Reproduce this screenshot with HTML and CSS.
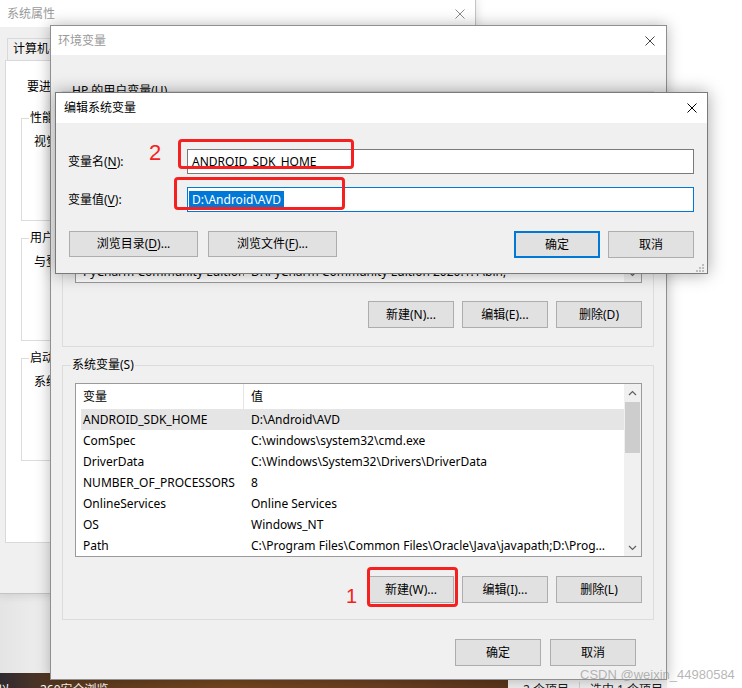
FILE: index.html
```html
<!DOCTYPE html>
<html lang="zh-CN">
<head>
<meta charset="utf-8">
<title>编辑系统变量</title>
<link rel="stylesheet" href="styles.css">
</head>
<body>
<div class="screen">
  <div class="backdrop"></div>
  <div class="desktop"><span class="desk-a">以</span><span class="desk-b">260安全浏览</span></div>
  <div class="statusbar"><span>2 个项目</span><span class="sb-sep"></span><span>选中 1 个项目</span></div>

  <section class="win win-sys">
    <header class="titlebar">
      <span class="title dim">系统属性</span>
      <svg class="close dim-x" width="10" height="10" viewBox="0 0 10 10"><path d="M0.5 0.5L9.5 9.5M9.5 0.5L0.5 9.5" stroke="currentColor" stroke-width="1"/></svg>
    </header>
    <div class="sys-body">
      <div class="tabs">
        <span class="tab">计算机名</span><span class="tab">硬件</span><span class="tab active">高级</span><span class="tab">系统保护</span><span class="tab">远程</span>
      </div>
      <div class="tabpanel">
        <p class="note">要进行大多数更改，你必须作为管理员登录。</p>
        <fieldset class="sp-group"><legend>性能</legend><p>视觉效果，处理器计划，内存使用，以及虚拟内存</p></fieldset>
        <fieldset class="sp-group"><legend>用户配置文件</legend><p>与登录帐户相关的桌面设置</p></fieldset>
        <fieldset class="sp-group"><legend>启动和故障恢复</legend><p>系统启动、系统故障和调试信息</p></fieldset>
      </div>
    </div>
  </section>

  <section class="win win-env">
    <header class="titlebar">
      <span class="title dim">环境变量</span>
      <svg class="close dim-x2" width="10" height="10" viewBox="0 0 10 10"><path d="M0.5 0.5L9.5 9.5M9.5 0.5L0.5 9.5" stroke="currentColor" stroke-width="1"/></svg>
    </header>
    <div class="env-body">
      <fieldset class="group group-user">
        <legend>HP 的用户变量(U)</legend>
        <div class="listview">
          <div class="lv-main">
            <div class="lv-row lv-head"><span class="c1">变量</span><span class="c2">值</span></div>
            <div class="lv-row"><span class="c1">ChocolateyLastPathUpdate</span><span class="c2">132512345678901234</span></div>
            <div class="lv-row"><span class="c1">GOPATH</span><span class="c2">C:\Users\HP\go</span></div>
            <div class="lv-row"><span class="c1">IntelliJ IDEA</span><span class="c2">D:\IntelliJ IDEA 2020.1\bin;</span></div>
            <div class="lv-row"><span class="c1">OneDrive</span><span class="c2">C:\Users\HP\OneDrive</span></div>
            <div class="lv-row"><span class="c1">OneDriveConsumer</span><span class="c2">C:\Users\HP\OneDrive</span></div>
            <div class="lv-row"><span class="c1">Path</span><span class="c2">C:\Users\HP\AppData\Local\Microsoft\WindowsApps;</span></div>
            <div class="lv-row"><span class="c1">PyCharm Community Edition</span><span class="c2">D:\PyCharm Community Edition 2020.1.1\bin;</span></div>
          </div>
          <div class="scrollbar">
            <span class="sb-btn"><svg width="9" height="6" viewBox="0 0 9 6"><path d="M1 5L4.5 1.5L8 5" fill="none" stroke="#606060" stroke-width="1.2"/></svg></span>
            <span class="sb-track"><span class="sb-thumb"></span></span>
            <span class="sb-btn"><svg width="9" height="6" viewBox="0 0 9 6"><path d="M1 1L4.5 4.5L8 1" fill="none" stroke="#606060" stroke-width="1.2"/></svg></span>
          </div>
        </div>
        <div class="btnrow">
          <button class="btn">新建(N)...</button>
          <button class="btn">编辑(E)...</button>
          <button class="btn">删除(D)</button>
        </div>
      </fieldset>

      <fieldset class="group group-sys">
        <legend>系统变量(S)</legend>
        <div class="listview">
          <div class="lv-main">
            <div class="lv-row lv-head"><span class="c1">变量</span><span class="c2">值</span></div>
            <div class="lv-row selected"><span class="c1">ANDROID_SDK_HOME</span><span class="c2">D:\Android\AVD</span></div>
            <div class="lv-row"><span class="c1">ComSpec</span><span class="c2">C:\windows\system32\cmd.exe</span></div>
            <div class="lv-row"><span class="c1">DriverData</span><span class="c2">C:\Windows\System32\Drivers\DriverData</span></div>
            <div class="lv-row"><span class="c1">NUMBER_OF_PROCESSORS</span><span class="c2">8</span></div>
            <div class="lv-row"><span class="c1">OnlineServices</span><span class="c2">Online Services</span></div>
            <div class="lv-row"><span class="c1">OS</span><span class="c2">Windows_NT</span></div>
            <div class="lv-row"><span class="c1">Path</span><span class="c2">C:\Program Files\Common Files\Oracle\Java\javapath;D:\Program Files\Python38\Scripts\</span></div>
          </div>
          <div class="scrollbar">
            <span class="sb-btn"><svg width="9" height="6" viewBox="0 0 9 6"><path d="M1 5L4.5 1.5L8 5" fill="none" stroke="#606060" stroke-width="1.2"/></svg></span>
            <span class="sb-track"><span class="sb-thumb"></span></span>
            <span class="sb-btn"><svg width="9" height="6" viewBox="0 0 9 6"><path d="M1 1L4.5 4.5L8 1" fill="none" stroke="#606060" stroke-width="1.2"/></svg></span>
          </div>
        </div>
        <div class="btnrow">
          <button class="btn">新建(W)...</button>
          <button class="btn">编辑(I)...</button>
          <button class="btn">删除(L)</button>
        </div>
      </fieldset>

      <div class="footer">
        <button class="btn">确定</button>
        <button class="btn">取消</button>
      </div>
    </div>
  </section>

  <section class="win win-edit">
    <header class="titlebar">
      <span class="title">编辑系统变量</span>
      <svg class="close" width="10" height="10" viewBox="0 0 10 10"><path d="M0.5 0.5L9.5 9.5M9.5 0.5L0.5 9.5" stroke="currentColor" stroke-width="1"/></svg>
    </header>
    <div class="edit-body">
      <div class="field">
        <label>变量名(<u>N</u>):</label>
        <div class="textbox">ANDROID_SDK_HOME</div>
      </div>
      <div class="field">
        <label>变量值(<u>V</u>):</label>
        <div class="textbox focus"><span class="sel">D:\Android\AVD</span></div>
      </div>
      <div class="actions">
        <button class="btn wide">浏览目录(<u>D</u>)...</button>
        <button class="btn wide">浏览文件(<u>F</u>)...</button>
        <span class="spacer"></span>
        <button class="btn ok">确定</button>
        <button class="btn cancel">取消</button>
      </div>
      <svg class="grip" width="8" height="8" viewBox="0 0 8 8"><g fill="#bdbdbd"><rect x="6" y="0" width="2" height="2"/><rect x="3" y="3" width="2" height="2"/><rect x="6" y="3" width="2" height="2"/><rect x="0" y="6" width="2" height="2"/><rect x="3" y="6" width="2" height="2"/><rect x="6" y="6" width="2" height="2"/></g></svg>
    </div>
  </section>

  <div class="mark mark-a"></div>
  <div class="mark mark-b"></div>
  <div class="mark mark-c"></div>
  <span class="num num-2">2</span>
  <span class="num num-1">1</span>
  <span class="watermark">CSDN @weixin_44980584</span>
</div>
</body>
</html>
```

FILE: styles.css
```css
* { box-sizing: border-box; }
html, body { margin: 0; padding: 0; }
body {
  width: 742px;
  height: 688px;
  overflow: hidden;
  background: #fff;
  font-family: "Noto Sans", "Noto Sans CJK SC", sans-serif;
  font-size: 12px;
  line-height: 16px;
  color: #000;
}
.screen { position: relative; width: 742px; height: 688px; overflow: hidden; }

/* desktop pieces behind the windows */
.backdrop {
  position: absolute; left: 0; top: 0; width: 70px; height: 673px;
  background: linear-gradient(90deg, #e4e4e4, #f3f3f3);
}
.desktop {
  position: absolute; left: 0; top: 673px; width: 508px; height: 15px;
  background: linear-gradient(90deg, #2f2a30 0%, #5c3a1f 12%, #74471f 45%, #6b4020 75%, #5a361b 100%);
  color: #fff; display: flex; padding-top: 9px; white-space: nowrap; overflow: hidden;
}
.desk-a { width: 40px; margin-left: -2px; overflow: hidden; }
.desk-b { margin-left: 2px; }
.statusbar {
  position: absolute; left: 508px; top: 673px; width: 159px; height: 15px;
  background: #f0f0f0; color: #1a1a1a; display: flex; padding: 9px 0 0 15px;
  white-space: nowrap; overflow: hidden;
}
.sb-sep { width: 1px; background: #d0d0d0; margin: 0 10px; }

/* generic window */
.win {
  position: absolute;
  background: #f0f0f0;
  border: 1px solid #a0a0a0;
  display: flex;
  flex-direction: column;
}
.titlebar {
  flex: none;
  display: flex;
  align-items: center;
  justify-content: space-between;
  background: #fff;
}
.title.dim { color: #9a9a9a; }
.close { display: block; color: #000; }
.close.dim-x { color: #8a8a8a; }
.close.dim-x2 { color: #444; }

/* 系统属性 */
.win-sys {
  left: -1px; top: -1px; width: 477px; height: 595px;
  border-color: #c4c4c4;
  box-shadow: 0 0 10px rgba(0,0,0,.15);
}
.win-sys .titlebar { height: 27px; padding: 0 10px 0 7px; }
.sys-body { flex: 1; padding: 11px 0 0 5px; }
.tabs { display: flex; margin-left: 2px; height: 22px; }
.tab {
  height: 22px; border: 1px solid #d9d9d9; border-bottom: none;
  padding: 2px 5px 0; background: #f0f0f0; margin-right: -1px; white-space: nowrap;
}
.tab.active { background: #fff; }
.tabpanel {
  width: 464px; height: 483px; background: #fff;
  border: 1px solid #d9d9d9; padding: 18px 15px 0;
}
.note { margin: 0 0 15px 6px; white-space: nowrap; }
.sp-group {
  margin: 0 0 9px; height: 111px; min-width: 0;
  border: 1px solid #dcdcdc; padding: 8px 0 0 12px;
}
.sp-group legend { margin-left: -5px; padding: 0 1px; }
.sp-group p { margin: 0; white-space: nowrap; }

/* 环境变量 */
.win-env {
  left: 50px; top: 25px; width: 617px; height: 655px;
  border-color: #8f8f8f;
  box-shadow: 0 0 14px rgba(0,0,0,.28);
}
.win-env .titlebar { height: 29px; padding: 0 11px 0 7px; }
.env-body { flex: 1; padding: 0 12px 0 11px; display: flex; flex-direction: column; }
.group {
  margin: 0; min-width: 0;
  border: 1px solid #dcdcdc;
  padding: 10px 11px 18px 12px;
}
.group legend { margin-left: -4px; padding: 0 1px; }
.group-user { margin-top: 28px; }
.group-sys { margin-top: 10px; padding-bottom: 16px; }

.listview {
  height: 174px; border: 1px solid #9a9a9a; background: #fff;
  display: flex; overflow: hidden;
}
.lv-main { flex: 1; min-width: 0; padding-left: 5px; overflow: hidden; }
.lv-row { display: flex; height: 21px; align-items: center; }
.lv-head { height: 25px; }
.lv-row.selected { background: #e5e5e5; }
.c1 { width: 163px; flex: none; padding-left: 2px; white-space: nowrap; overflow: hidden; }
.lv-head .c1 { height: 100%; display: flex; align-items: center; border-right: 1px solid #e5e5e5; }
.c2 {
  flex: 1; min-width: 0; padding: 0 16px 0 7px;
  white-space: nowrap; overflow: hidden; text-overflow: ellipsis;
}
.scrollbar { width: 17px; flex: none; background: #f0f0f0; display: flex; flex-direction: column; }
.sb-btn { height: 17px; flex: none; display: flex; align-items: center; justify-content: center; }
.sb-btn svg { display: block; }
.sb-track { flex: 1; padding: 1px 0; }
.sb-thumb { display: block; height: 51px; background: #cdcdcd; margin: 0 1px; }

.btnrow { display: flex; justify-content: flex-end; gap: 8px; margin-top: 18px; }
.group-sys .btnrow { margin-top: 19px; }
.btn {
  width: 86px; height: 27px; padding: 0;
  background: #e1e1e1; border: 1px solid #adadad;
  font: inherit; color: #000; white-space: nowrap;
}
.btn u { text-decoration-thickness: 1px; text-underline-offset: 2px; }
.footer { display: flex; justify-content: flex-end; gap: 9px; margin-top: 19px; padding-right: 18px; }

/* 编辑系统变量 */
.win-edit {
  left: 55px; top: 92px; width: 653px; height: 182px;
  border-color: #7a7a7a;
  box-shadow: 0 0 16px rgba(0,0,0,.35);
}
.win-edit .titlebar { height: 30px; padding: 0 10px 0 8px; }
.edit-body { flex: 1; padding: 26px 13px 0 12px; position: relative; }
.field { display: flex; align-items: center; }
.field + .field { margin-top: 13px; }
.field label { width: 119px; flex: none; white-space: nowrap; }
.field u { text-underline-offset: 2px; }
.textbox {
  flex: 1; height: 25px; border: 1px solid #7a7a7a; background: #fff;
  display: flex; align-items: center; padding-left: 4px; white-space: nowrap;
}
.textbox.focus { border-color: #0078d7; padding-left: 1px; }
.sel { background: #0078d7; color: #fff; padding: 1px 3px 1px 3px; }
.actions { display: flex; margin-top: 19px; padding-left: 1px; }
.btn.wide { width: 129px; height: 26px; }
.btn.wide + .btn.wide { margin-left: 10px; }
.spacer { flex: 1; }
.btn.ok { border: 2px solid #0078d7; }
.btn.cancel { margin-left: 8px; }
.grip { position: absolute; right: 3px; bottom: 1px; display: block; }

/* annotations */
.mark { position: absolute; border: 3px solid #f52020; border-radius: 4px; }
.mark-a { left: 178px; top: 139px; width: 176px; height: 30px; }
.mark-b { left: 174px; top: 177px; width: 171px; height: 33px; }
.mark-c { left: 367px; top: 567px; width: 91px; height: 40px; }
.num {
  position: absolute; color: #f52020; line-height: 1;
  font-family: "Liberation Sans", Arial, sans-serif;
}
.num-2 { left: 149px; top: 142px; font-size: 22px; }
.num-1 { left: 346px; top: 586px; font-size: 20px; }
.watermark {
  position: absolute; left: 580px; top: 667px;
  font-family: "Liberation Sans", Arial, sans-serif; font-size: 13px;
  color: rgba(150,150,150,.7); white-space: nowrap;
}
```
